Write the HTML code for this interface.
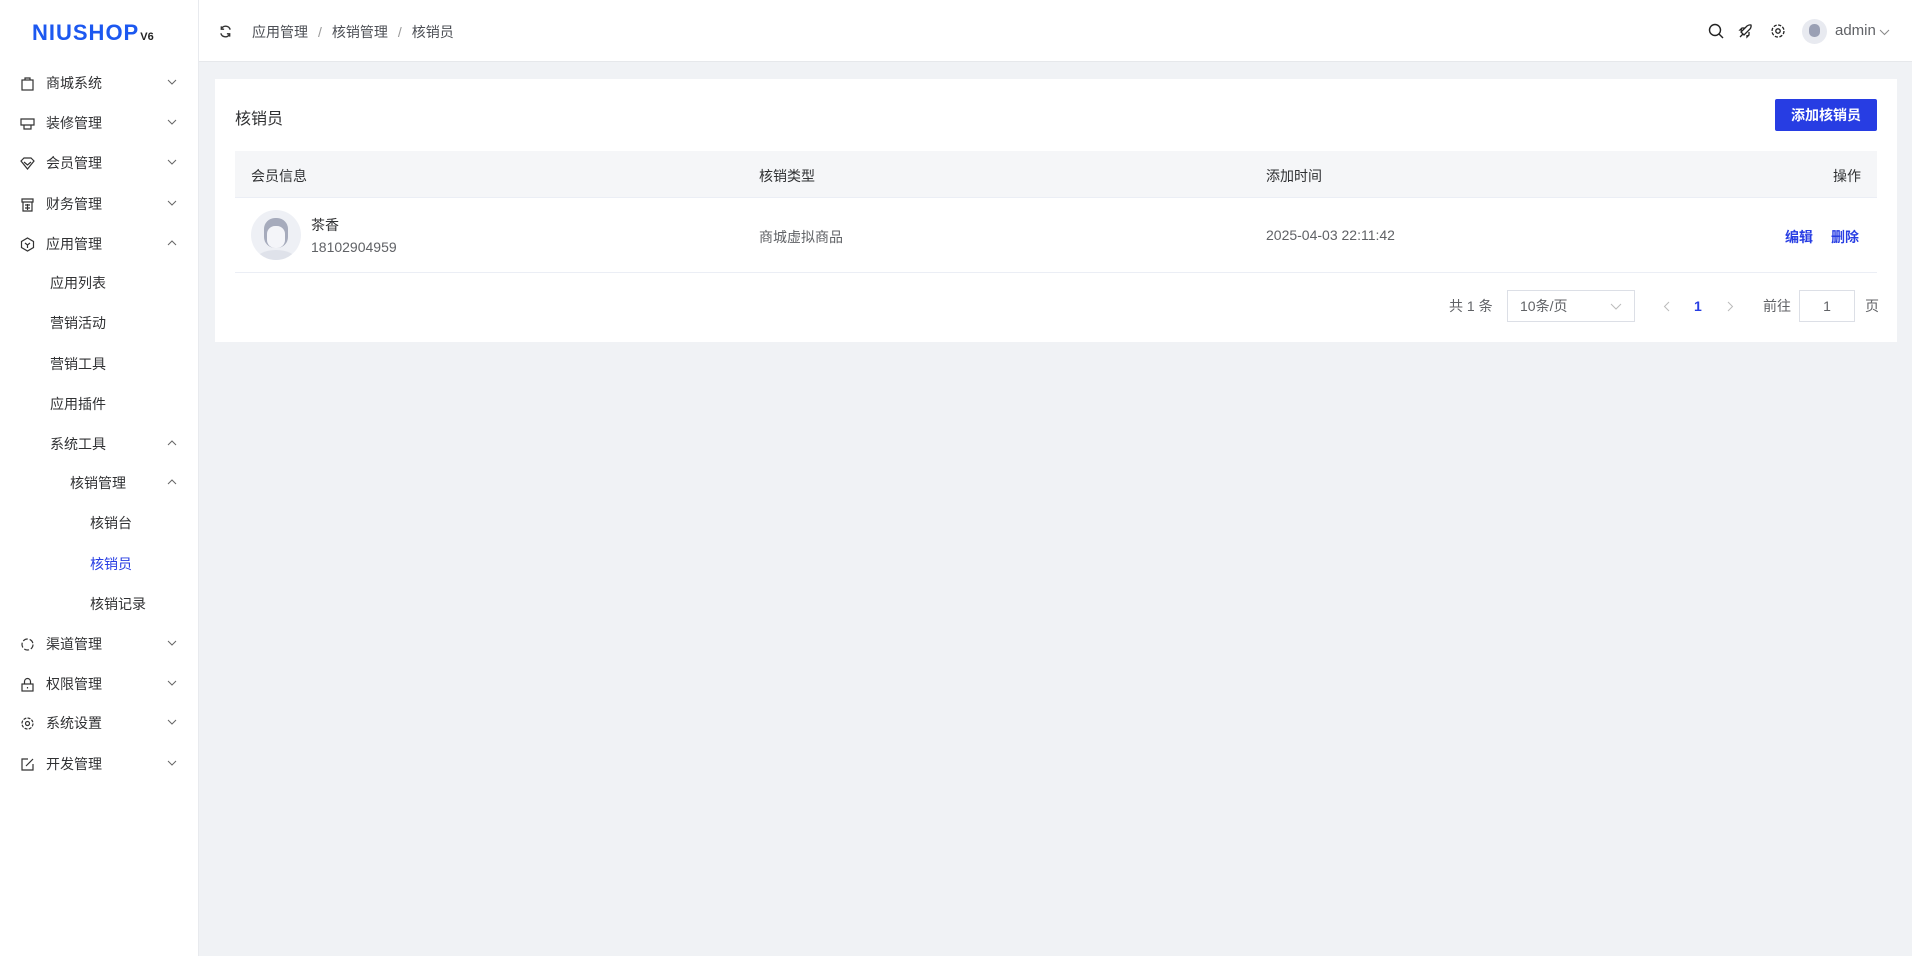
<!DOCTYPE html>
<html><head><meta charset="utf-8"><style>
*{margin:0;padding:0;box-sizing:border-box}
body{width:1912px;height:956px;background:#f0f2f5;font-family:"Liberation Sans","Noto Sans CJK SC",sans-serif;font-size:14px;color:#303133;position:relative;overflow:hidden}
.side{position:absolute;left:0;top:0;width:199px;height:956px;background:#fff;border-right:1px solid #e8eaee}
.logo{position:absolute;left:32px;top:20px;font-weight:bold;font-size:22px;color:#1c58f0;letter-spacing:1px;font-family:"Liberation Sans",sans-serif}
.logo small{font-size:11px;color:#222;font-weight:bold;margin-left:1px;letter-spacing:0}
.mi{position:absolute;left:0;width:199px;height:30px;line-height:30px;font-size:14px;color:#303133}
.mi svg.ic{position:absolute;left:20px;top:8px}
.mi .ar{position:absolute;left:167px;top:11px}
.hdr{position:absolute;left:199px;top:0;right:0;height:62px;background:#fff;border-bottom:1px solid #e6e8eb}
.crumb{position:absolute;left:53px;top:22px;font-size:14px;color:#4c4f55}
.crumb span{color:#999;margin:0 10px}
.card{position:absolute;left:215px;top:79px;width:1682px;height:263px;background:#fff}
.title{position:absolute;left:20px;top:26px;font-size:16px;color:#303133}
.btn{position:absolute;left:1560px;top:20px;width:102px;height:32px;background:#273de3;color:#fff;border-radius:2px;text-align:center;line-height:32px;font-size:14px;font-weight:bold}
.th{position:absolute;left:20px;top:72px;width:1642px;height:47px;background:#f5f6f8;border-bottom:1px solid #ebeef5}
.th div,.tr div.c{position:absolute;top:15px;font-size:14px}
.tr{position:absolute;left:20px;top:119px;width:1642px;height:75px;border-bottom:1px solid #ebeef5}
.av{position:absolute;left:16px;top:12px;width:50px;height:50px;border-radius:50%;background:#eef0f5;overflow:hidden}
.pg{position:absolute;top:211px;font-size:14px;color:#606266}
.box{position:absolute;border:1px solid #dcdfe6;height:32px;top:211px}
</style></head><body>
<div class="side">
<div class="logo">NIUSHOP<small>V6</small></div>
<div class="mi" style="top:68px"><svg class="ic" width="15" height="15" viewBox="0 0 15 15" fill="none" stroke="#333" stroke-width="1.2"><rect x="2" y="4" width="11" height="10"/><path d="M5 4V2h5v2"/></svg><span style="position:absolute;left:46px">商城系统</span><svg class="ar" width="10" height="6" viewBox="0 0 10 6" fill="none" stroke="#666"><path d="M1 1l4 4 4-4"/></svg></div>
<div class="mi" style="top:108px"><svg class="ic" width="15" height="15" viewBox="0 0 15 15" fill="none" stroke="#333" stroke-width="1.2"><path d="M1 3h13v6H1zM4 9v4h7V9"/></svg><span style="position:absolute;left:46px">装修管理</span><svg class="ar" width="10" height="6" viewBox="0 0 10 6" fill="none" stroke="#666"><path d="M1 1l4 4 4-4"/></svg></div>
<div class="mi" style="top:148px"><svg class="ic" width="15" height="15" viewBox="0 0 15 15" fill="none" stroke="#333" stroke-width="1.2"><path d="M1 5l3-3h7l3 3-6.5 8z M4 6l3.5 3 3.5-3"/></svg><span style="position:absolute;left:46px">会员管理</span><svg class="ar" width="10" height="6" viewBox="0 0 10 6" fill="none" stroke="#666"><path d="M1 1l4 4 4-4"/></svg></div>
<div class="mi" style="top:189px"><svg class="ic" width="15" height="15" viewBox="0 0 15 15" fill="none" stroke="#333" stroke-width="1.2"><path d="M2 2h11v3H2zM3 5v9h9V5M5 8h5M5 11h5M7.5 7v6"/></svg><span style="position:absolute;left:46px">财务管理</span><svg class="ar" width="10" height="6" viewBox="0 0 10 6" fill="none" stroke="#666"><path d="M1 1l4 4 4-4"/></svg></div>
<div class="mi" style="top:229px"><svg class="ic" width="15" height="15" viewBox="0 0 15 15" fill="none" stroke="#333" stroke-width="1.2"><path d="M7.5 1l6 3.5v6l-6 3.5-6-3.5v-6z M5 6l2.5 2 2.5-2M7.5 8v3"/></svg><span style="position:absolute;left:46px">应用管理</span><svg class="ar" width="10" height="6" viewBox="0 0 10 6" fill="none" stroke="#666"><path d="M1 5l4-4 4 4"/></svg></div>
<div class="mi" style="top:268px"><span style="position:absolute;left:50px">应用列表</span></div>
<div class="mi" style="top:308px"><span style="position:absolute;left:50px">营销活动</span></div>
<div class="mi" style="top:349px"><span style="position:absolute;left:50px">营销工具</span></div>
<div class="mi" style="top:389px"><span style="position:absolute;left:50px">应用插件</span></div>
<div class="mi" style="top:429px"><span style="position:absolute;left:50px">系统工具</span><svg class="ar" width="10" height="6" viewBox="0 0 10 6" fill="none" stroke="#666"><path d="M1 5l4-4 4 4"/></svg></div>
<div class="mi" style="top:468px"><span style="position:absolute;left:70px">核销管理</span><svg class="ar" width="10" height="6" viewBox="0 0 10 6" fill="none" stroke="#666"><path d="M1 5l4-4 4 4"/></svg></div>
<div class="mi" style="top:508px"><span style="position:absolute;left:90px">核销台</span></div>
<div class="mi" style="top:549px;color:#273de3"><span style="position:absolute;left:90px">核销员</span></div>
<div class="mi" style="top:589px"><span style="position:absolute;left:90px">核销记录</span></div>
<div class="mi" style="top:629px"><svg class="ic" width="15" height="15" viewBox="0 0 15 15" fill="none" stroke="#333" stroke-width="1.2"><circle cx="7.5" cy="7.5" r="5.5" stroke-dasharray="5 2"/></svg><span style="position:absolute;left:46px">渠道管理</span><svg class="ar" width="10" height="6" viewBox="0 0 10 6" fill="none" stroke="#666"><path d="M1 1l4 4 4-4"/></svg></div>
<div class="mi" style="top:669px"><svg class="ic" width="15" height="15" viewBox="0 0 15 15" fill="none" stroke="#333" stroke-width="1.2"><rect x="2" y="7" width="11" height="7"/><path d="M4.5 7V4.5a3 3 0 016 0V7M7.5 10v1.5"/></svg><span style="position:absolute;left:46px">权限管理</span><svg class="ar" width="10" height="6" viewBox="0 0 10 6" fill="none" stroke="#666"><path d="M1 1l4 4 4-4"/></svg></div>
<div class="mi" style="top:708px"><svg class="ic" width="15" height="15" viewBox="0 0 15 15" fill="none" stroke="#333" stroke-width="1.2"><circle cx="7.5" cy="7.5" r="2"/><circle cx="7.5" cy="7.5" r="5.5" stroke-dasharray="3 1.3"/></svg><span style="position:absolute;left:46px">系统设置</span><svg class="ar" width="10" height="6" viewBox="0 0 10 6" fill="none" stroke="#666"><path d="M1 1l4 4 4-4"/></svg></div>
<div class="mi" style="top:749px"><svg class="ic" width="15" height="15" viewBox="0 0 15 15" fill="none" stroke="#333" stroke-width="1.2"><path d="M8 2H2v11h11V7M6 9l7-7"/></svg><span style="position:absolute;left:46px">开发管理</span><svg class="ar" width="10" height="6" viewBox="0 0 10 6" fill="none" stroke="#666"><path d="M1 1l4 4 4-4"/></svg></div>
</div>
<div class="hdr">
<svg style="position:absolute;left:20px;top:25px" width="13" height="13" viewBox="0 0 14 14" fill="none" stroke="#333" stroke-width="1.5"><path d="M12 5A5 5 0 002.5 4.5M2 9a5 5 0 009.5.5M2.5 1.5v3h3M11.5 12.5v-3h-3"/></svg>
<div class="crumb">应用管理<span>/</span>核销管理<span>/</span>核销员</div>
<svg style="position:absolute;left:1509px;top:23px" width="16" height="16" viewBox="0 0 16 16" fill="none" stroke="#222" stroke-width="1.4"><circle cx="7" cy="7" r="5.5"/><path d="M11 11l4 4"/></svg>
<svg style="position:absolute;left:1539px;top:23px" width="16" height="16" viewBox="0 0 16 16" fill="none" stroke="#222" stroke-width="1.3"><path d="M5 11l-2-2 6-6c2-1.5 4-1 4-1s.5 2-1 4l-6 6zM5 11l-3 3M4 7H2l2-2h3M9 12v2l2-2V9"/></svg>
<svg style="position:absolute;left:1571px;top:23px" width="16" height="16" viewBox="0 0 16 16" fill="none" stroke="#222" stroke-width="1.3"><circle cx="8" cy="8" r="2.2"/><circle cx="8" cy="8" r="6" stroke-dasharray="3.2 1.5"/></svg>
<div style="position:absolute;left:1603px;top:19px;width:25px;height:25px;border-radius:50%;background:#e8eaf0"><div style="margin:5px auto 0;width:11px;height:13px;border-radius:5px;background:#9aa0b4"></div></div>
<div style="position:absolute;left:1636px;top:22px;font-size:15px;color:#606266">admin</div>
<svg style="position:absolute;left:1680px;top:29px" width="11" height="7" viewBox="0 0 11 7" fill="none" stroke="#888"><path d="M1 1l4.5 4.5L10 1"/></svg>
</div>
<div class="card">
<div class="title">核销员</div>
<div class="btn">添加核销员</div>
<div class="th"><div style="left:16px">会员信息</div><div style="left:524px">核销类型</div><div style="left:1031px">添加时间</div><div style="right:16px">操作</div></div>
<div class="tr">
<div class="av"><div style="position:absolute;left:13px;top:8px;width:24px;height:30px;border-radius:11px;background:#a6abbc"></div><div style="position:absolute;left:16px;top:16px;width:18px;height:22px;border-radius:8px;background:#f4f5f9"></div><div style="position:absolute;left:5px;top:40px;width:40px;height:20px;border-radius:50%;background:#dfe2ea"></div></div>
<div class="c" style="left:76px;top:17px">茶香</div>
<div class="c" style="left:76px;top:41px;color:#606266">18102904959</div>
<div class="c" style="left:524px;top:29px;color:#606266">商城虚拟商品</div>
<div class="c" style="left:1031px;top:29px;color:#606266">2025-04-03 22:11:42</div>
<div class="c" style="left:1550px;top:29px;color:#273de3;font-weight:bold">编辑</div>
<div class="c" style="left:1596px;top:29px;color:#273de3;font-weight:bold">删除</div>
</div>
<div class="pg" style="left:1234px;line-height:32px">共 1 条</div>
<div class="box" style="left:1292px;width:128px;line-height:30px;padding-left:12px;color:#606266">10条/页<svg style="position:absolute;right:12px;top:12px" width="12" height="7" viewBox="0 0 12 7" fill="none" stroke="#bbb"><path d="M1 1l5 5 5-5"/></svg></div>
<svg style="position:absolute;left:1448px;top:222px" width="7" height="11" viewBox="0 0 7 11" fill="none" stroke="#bbb"><path d="M6 1L1.5 5.5 6 10"/></svg>
<div class="pg" style="left:1479px;line-height:32px;color:#273de3;font-weight:bold">1</div>
<svg style="position:absolute;left:1512px;top:222px" width="7" height="11" viewBox="0 0 7 11" fill="none" stroke="#bbb"><path d="M1 1l4.5 4.5L1 10"/></svg>
<div class="pg" style="left:1548px;line-height:32px">前往</div>
<div class="box" style="left:1584px;width:56px;text-align:center;line-height:30px;color:#606266">1</div>
<div class="pg" style="left:1650px;line-height:32px">页</div>
</div>
</body></html>
